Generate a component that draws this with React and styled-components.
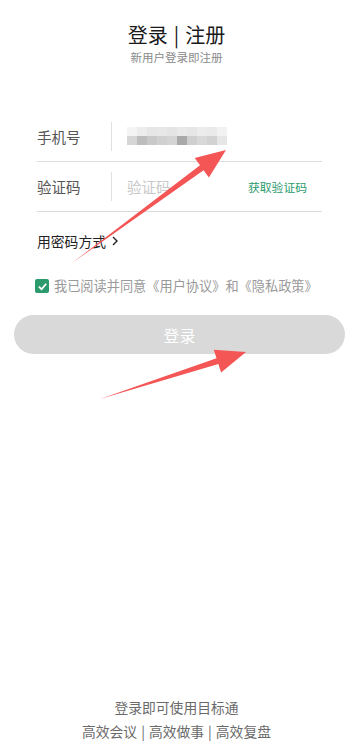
import React from 'react';
import styled, { createGlobalStyle } from 'styled-components';

const Global = createGlobalStyle`
  html, body { margin: 0; padding: 0; background: #fff; }
  body { font-family: "Noto Sans CJK SC", "Noto Sans", sans-serif; }
`;

const Page = styled.div`
  position: relative;
  min-height: 745px;
  display: flex;
  flex-direction: column;
  overflow: hidden;
`;

const Header = styled.div`
  padding-top: 21px;
  text-align: center;
`;

const Title = styled.div`
  font-size: 20px;
  line-height: 28px;
  color: #1a1a1a;
`;

const Bar = styled.span`
  margin: 0 ${(p) => p.space || 5}px;
`;

const Subtitle = styled.div`
  font-size: 11.5px;
  line-height: 16px;
  color: #8a8a8a;
`;

const Form = styled.div`
  margin: 47px 31px 0 37px;
`;

const Row = styled.div`
  display: flex;
  align-items: center;
  height: 49px;
  border-bottom: 1px solid #dcdcdc;
`;

const Label = styled.div`
  width: 74px;
  font-size: 14.5px;
  color: #555;
`;

const Divider = styled.div`
  width: 1px;
  height: 29px;
  background: #e0e0e0;
  margin-right: 15px;
`;

const Placeholder = styled.div`
  flex: 1;
  font-size: 14.5px;
  color: #c8c8c8;
`;

const CodeLink = styled.div`
  font-size: 11.8px;
  color: #2b9a6c;
  margin-right: 15px;
`;

const Switch = styled.div`
  margin: 19px 0 0 37px;
  font-size: 13.8px;
  line-height: 20px;
  color: #222;
  display: flex;
  align-items: center;
  gap: 5px;
`;

const Agree = styled.div`
  margin: 26px 0 0 35px;
  display: flex;
  align-items: center;
  gap: 5px;
  font-size: 13.2px;
  line-height: 18px;
  color: #9a9a9a;
`;

const Check = styled.span`
  width: 14px;
  height: 14px;
  border-radius: 2px;
  background: #2b9a6c;
  display: flex;
  align-items: center;
  justify-content: center;
`;

const Button = styled.div`
  margin: 20px 8px 0 14px;
  height: 39px;
  border-radius: 20px;
  background: #d9d9d9;
  color: #fff;
  font-size: 16px;
  display: flex;
  align-items: center;
  justify-content: center;
`;

const Footer = styled.div`
  margin-top: auto;
  padding-bottom: 2px;
  text-align: center;
  font-size: 13.8px;
  line-height: 24px;
  color: #6a6a6a;
`;

const Overlay = styled.svg`
  position: absolute;
  left: 0;
  top: 0;
  pointer-events: none;
`;

const mosaic = [
  ['#f4f4f4', '#ececec', '#e6e6e6', '#e8e8e8', '#e4e4e4', '#e9e9e9', '#e6e6e6', '#ececec', '#eaeaea', '#f2f2f2'],
  ['#d6d6d6', '#bdbdbd', '#c9c9c9', '#d0d0d0', '#d4d4d4', '#a9a9a9', '#cfcfcf', '#d8d8d8', '#d2d2d2', '#e6e6e6'],
];

const Blurred = () => (
  <svg width="100" height="20" viewBox="0 0 100 20">
    {mosaic.map((row, r) =>
      row.map((c, i) => <rect key={`${r}-${i}`} x={i * 10} y={r * 9} width="10" height="9" fill={c} />)
    )}
  </svg>
);

function arrow(x1, y1, x2, y2, headLen = 30, headW = 24, shaftW = 6) {
  const dx = x2 - x1;
  const dy = y2 - y1;
  const len = Math.hypot(dx, dy);
  const ux = dx / len;
  const uy = dy / len;
  const nx = -uy;
  const ny = ux;
  const bx = x2 - ux * headLen;
  const by = y2 - uy * headLen;
  const pts = [
    [x1, y1],
    [bx + nx * shaftW / 2, by + ny * shaftW / 2],
    [bx + nx * headW / 2, by + ny * headW / 2],
    [x2, y2],
    [bx - nx * headW / 2, by - ny * headW / 2],
    [bx - nx * shaftW / 2, by - ny * shaftW / 2],
  ];
  return pts.map((p) => p.join(',')).join(' ');
}

export default function App() {
  return (
    <Page>
      <Global />
      <Header>
        <Title>
          登录<Bar space={6}>|</Bar>注册
        </Title>
        <Subtitle>新用户登录即注册</Subtitle>
      </Header>

      <Form>
        <Row>
          <Label>手机号</Label>
          <Divider />
          <Blurred />
        </Row>
        <Row>
          <Label>验证码</Label>
          <Divider />
          <Placeholder>验证码</Placeholder>
          <CodeLink>获取验证码</CodeLink>
        </Row>
      </Form>

      <Switch>
        用密码方式
        <svg width="8" height="12" viewBox="0 0 8 12">
          <path d="M2 2 L6 6 L2 10" fill="none" stroke="#222" strokeWidth="1.4" />
        </svg>
      </Switch>

      <Agree>
        <Check>
          <svg width="11" height="11" viewBox="0 0 12 12">
            <path d="M2 6.2 L5 9 L10 3" fill="none" stroke="#fff" strokeWidth="2" />
          </svg>
        </Check>
        我已阅读并同意《用户协议》和《隐私政策》
      </Agree>

      <Button>登录</Button>

      <Footer>
        <div>登录即可使用目标通</div>
        <div>
          高效会议<Bar space={4}>|</Bar>高效做事<Bar space={4}>|</Bar>高效复盘
        </div>
      </Footer>

      <Overlay width="353" height="745">
        <polygon points={arrow(72, 263, 226, 150)} fill="#f45555" />
        <polygon points={arrow(100, 399, 246, 352)} fill="#f45555" />
      </Overlay>
    </Page>
  );
}
